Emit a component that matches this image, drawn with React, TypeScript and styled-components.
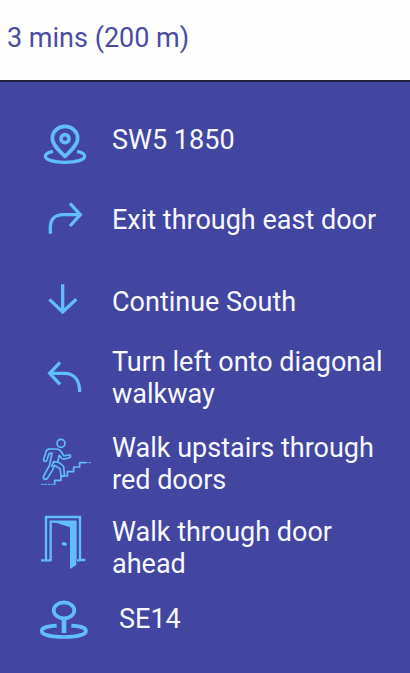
import React from "react";
import styled, { createGlobalStyle } from "styled-components";

const GlobalStyle = createGlobalStyle`
  *, *::before, *::after { box-sizing: border-box; }
  body { margin: 0; background: #4246a1; font-family: Roboto, sans-serif; }
`;

const Page = styled.main`
  min-height: 100vh;
  display: flex;
  flex-direction: column;
  font-size: 27px;
  line-height: 32px;
`;

const Summary = styled.header`
  padding: 22px 7px 26px;
  background: #fefefe;
  color: #4a4ca4;
  border-bottom: 2px solid #20223f;
`;

const SummaryText = styled.h1`
  margin: 0;
  font: inherit;
`;

const Steps = styled.ol`
  flex: 1;
  margin: 0;
  padding: 28px 16px 24px 35px;
  list-style: none;
  background: #4246a1;
  color: #f8f8ff;
`;

const Step = styled.li<{ $after: number; $gap: number }>`
  display: flex;
  align-items: center;
  gap: ${(p) => p.$gap}px;
  margin-bottom: ${(p) => p.$after}px;
`;

const Icon = styled.svg`
  flex: none;
  width: 60px;
  height: 60px;
  overflow: visible;
  fill: none;
  stroke: #62bdfb;
  stroke-width: 10;
`;

const Label = styled.span`
  flex: 1;
  min-width: 0;
`;

const OriginIcon = () => (
  <Icon viewBox="0 -15 180 180" aria-hidden="true">
    <path d="M90 124C76 110 52 91 52 70a38 36 0 0 1 76 0C128 91 104 110 90 124Z" strokeLinejoin="round" strokeWidth="11" />
    <circle cx="90" cy="71" r="12" strokeWidth="11" />
    <path d="M54 109C39 112 31 118 31 124C31 135 57 142 90 142S149 135 149 124C149 118 141 112 126 109" />
  </Icon>
);

const RightIcon = () => (
  <Icon viewBox="0 0 180 180" aria-hidden="true">
    <path d="M46 131V113C46 88 60 74 85 74H134M105 40L136 74L105 108" />
  </Icon>
);

const DownIcon = () => (
  <Icon viewBox="0 6 180 180" aria-hidden="true">
    <path d="M83 43V126M43 88L83 126L124 88" />
  </Icon>
);

const LeftIcon = () => (
  <Icon viewBox="0 9 180 180" aria-hidden="true">
    <path d="M75 52L44 85L75 118M45 85H88C118 85 134 106 134 141" />
  </Icon>
);

const StairsIcon = () => (
  <Icon viewBox="0 12 180 180" aria-hidden="true">
    <g strokeWidth="5" strokeLinecap="round" strokeLinejoin="round">
      <circle cx="78" cy="40" r="12" />
      <path d="M48 57C39 56 34 60 32 68L26 87C24 94 33 97 36 90L42 71L51 69L46 94C44 101 45 104 42 109L26 138C22 146 31 152 37 145L54 118L58 106L75 116L78 136C80 141 89 140 88 133L86 110C85 107 82 105 79 103L68 95L73 76L79 84C82 87 85 88 89 87L103 83C110 80 107 73 100 75L87 78L77 63C73 58 69 57 62 57Z" />
      <path d="M50 109L56 95L67 96" />
      <path d="M59 163V151H78V138H97V125H116V111H134V98H151" />
      <path d="M152 98H168M20 163H58" strokeWidth="3" strokeDasharray="5 5" />
    </g>
  </Icon>
);

const DoorIcon = () => (
  <Icon viewBox="0 24 180 180" aria-hidden="true">
    <path d="M18 151H50M33 151V21H135V150H151M126 151H136" strokeWidth="7" />
    <path d="M47 151V35H121V148" strokeWidth="7" />
    <path d="M49 34L105 52V177L124 165V34Z" fill="#62bdfb" stroke="none" />
    <ellipse cx="88" cy="102" rx="8" ry="5" fill="#62bdfb" stroke="none" transform="rotate(10 88 102)" />
  </Icon>
);

const DestinationIcon = () => (
  <Icon viewBox="0 -6 180 180" aria-hidden="true">
    <ellipse cx="87" cy="58" rx="31" ry="24" strokeWidth="11" />
    <path d="M87 84V126" strokeWidth="14" />
    <path d="M65 104C36 105 20 112 20 120C20 131 49 138 87 138S153 131 153 120C153 112 138 105 109 104" strokeWidth="11" />
  </Icon>
);

const steps = [
  { icon: OriginIcon, text: "SW5 1850", after: 20, gap: 17 },
  { icon: RightIcon, text: "Exit through east door", after: 22, gap: 17 },
  { icon: DownIcon, text: "Continue South", after: 14, gap: 17 },
  { icon: LeftIcon, text: "Turn left onto diagonal walkway", after: 22, gap: 17 },
  { icon: StairsIcon, text: "Walk upstairs through red doors", after: 20, gap: 17 },
  { icon: DoorIcon, text: "Walk through door ahead", after: 9, gap: 17 },
  { icon: DestinationIcon, text: "SE14", after: 0, gap: 24 },
];

export default function App() {
  return (
    <>
      <GlobalStyle />
      <Page>
        <Summary>
          <SummaryText>3 mins (200 m)</SummaryText>
        </Summary>
        <Steps>
          {steps.map(({ icon: StepIcon, text, after, gap }) => (
            <Step key={text} $after={after} $gap={gap}>
              <StepIcon />
              <Label>{text}</Label>
            </Step>
          ))}
        </Steps>
      </Page>
    </>
  );
}
